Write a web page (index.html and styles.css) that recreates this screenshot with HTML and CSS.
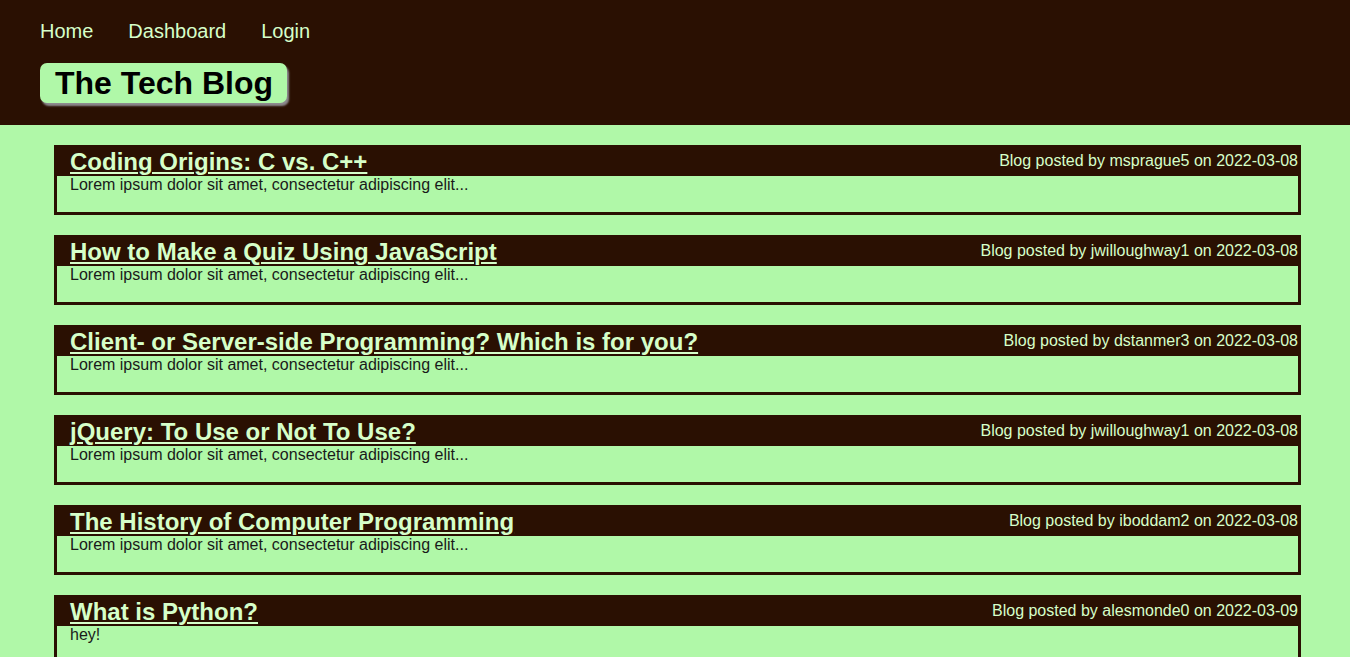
FILE: index.html
```html
<!DOCTYPE html>
<html lang="en">
<head>
<meta charset="utf-8">
<title>The Tech Blog</title>
<link rel="stylesheet" href="styles.css">
</head>
<body>
<header class="site-header">
  <nav class="nav">
    <a href="#" class="nav-link">Home</a>
    <a href="#" class="nav-link">Dashboard</a>
    <a href="#" class="nav-link">Login</a>
  </nav>
  <h1 class="brand">The Tech Blog</h1>
</header>
<main class="posts">
  <article class="post">
    <div class="post-head">
      <a href="#" class="post-title">Coding Origins: C vs. C++</a>
      <span class="post-meta">Blog posted by msprague5 on 2022-03-08</span>
    </div>
    <p class="post-body">Lorem ipsum dolor sit amet, consectetur adipiscing elit...</p>
  </article>
  <article class="post">
    <div class="post-head">
      <a href="#" class="post-title">How to Make a Quiz Using JavaScript</a>
      <span class="post-meta">Blog posted by jwilloughway1 on 2022-03-08</span>
    </div>
    <p class="post-body">Lorem ipsum dolor sit amet, consectetur adipiscing elit...</p>
  </article>
  <article class="post">
    <div class="post-head">
      <a href="#" class="post-title">Client- or Server-side Programming? Which is for you?</a>
      <span class="post-meta">Blog posted by dstanmer3 on 2022-03-08</span>
    </div>
    <p class="post-body">Lorem ipsum dolor sit amet, consectetur adipiscing elit...</p>
  </article>
  <article class="post">
    <div class="post-head">
      <a href="#" class="post-title">jQuery: To Use or Not To Use?</a>
      <span class="post-meta">Blog posted by jwilloughway1 on 2022-03-08</span>
    </div>
    <p class="post-body">Lorem ipsum dolor sit amet, consectetur adipiscing elit...</p>
  </article>
  <article class="post">
    <div class="post-head">
      <a href="#" class="post-title">The History of Computer Programming</a>
      <span class="post-meta">Blog posted by iboddam2 on 2022-03-08</span>
    </div>
    <p class="post-body">Lorem ipsum dolor sit amet, consectetur adipiscing elit...</p>
  </article>
  <article class="post">
    <div class="post-head">
      <a href="#" class="post-title">What is Python?</a>
      <span class="post-meta">Blog posted by alesmonde0 on 2022-03-09</span>
    </div>
    <p class="post-body">hey!</p>
  </article>
</main>
</body>
</html>
```

FILE: styles.css
```css
html, body {
  margin: 0;
  padding: 0;
}
body {
  background: #b0f8a8;
  font-family: "Liberation Sans", Arial, sans-serif;
  color: #1a1a1a;
}
.site-header {
  background: #2a1002;
  height: 125px;
  padding: 19px 40px 0;
  box-sizing: border-box;
}
.nav {
  display: flex;
  gap: 35px;
}
.nav-link {
  color: #d6ffc9;
  text-decoration: none;
  font-size: 20px;
  line-height: 24px;
}
.brand {
  display: inline-block;
  margin: 20px 0 0;
  background: #b0f8a8;
  color: #000;
  font-size: 32px;
  font-weight: bold;
  line-height: 38px;
  padding: 1px 14px 1px 15px;
  border-radius: 7px;
  box-shadow: 2px 3px 2px #8d8a8e;
}
.posts {
  display: flex;
  flex-direction: column;
  gap: 20px;
  padding: 20px 49px 20px 54px;
}
.post {
  border: 3px solid #2a1002;
  height: 64px;
  box-sizing: content-box;
}
.post-head {
  background: #2a1002;
  height: 28px;
  display: flex;
  justify-content: space-between;
  align-items: flex-start;
  padding-left: 13px;
}
.post-title {
  color: #d6ffc9;
  font-size: 24px;
  font-weight: bold;
  line-height: 28px;
  margin-top: 0;
  text-decoration: underline;
  text-decoration-thickness: 2px;
  text-underline-offset: 2px;
}
.post-meta {
  color: #d6ffc9;
  font-size: 16px;
  line-height: 20px;
  margin-top: 3px;
}
.post-body {
  margin: 0;
  padding: 0 13px;
  font-size: 16px;
  line-height: 18px;
}
```
